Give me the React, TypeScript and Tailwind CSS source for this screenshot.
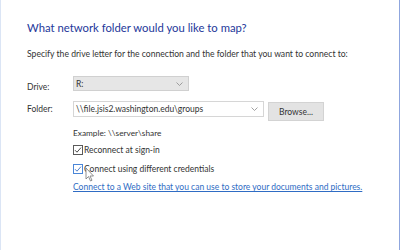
import React from "react";

const Check = ({ blue }: { blue?: boolean }) => (
  <span
    className={`flex h-[10px] w-[10px] shrink-0 items-center justify-center border ${
      blue ? "border-[#4a86d8]" : "border-[#5a5a5a]"
    } bg-white`}
  >
    <svg width="8" height="8" viewBox="0 0 8 8">
      <path d="M1 4.2 L3 6.2 L7 1.6" fill="none" stroke={blue ? "#3b6fc4" : "#333"} strokeWidth="0.9" />
    </svg>
  </span>
);

const Chevron = () => (
  <svg width="7" height="4" viewBox="0 0 7 4">
    <path d="M0.5 0.5 L3.5 3.5 L6.5 0.5" fill="none" stroke="#8a8a8a" strokeWidth="0.8" />
  </svg>
);

export default function App() {
  return (
    <div
      className="relative flex h-[250px] w-[400px] flex-col border-l border-l-[#dbe5f5] border-r border-r-[#8fa6de] bg-white text-[#333333]"
      style={{ fontFamily: 'Lato, "Noto Sans", sans-serif' }}
    >
      <div className="pl-[26px] pt-[20px] text-[11.3px] leading-[16px] text-[#24389a]">
        What network folder would you like to map?
      </div>
      <div className="mt-[11px] pl-[26px] text-[8.6px] leading-[14px]">
        Specify the drive letter for the connection and the folder that you want to connect to:
      </div>
      <div className="mt-[15px] flex items-start pl-[26px] text-[8.5px] leading-[14px]">
        <span className="mt-[4px] w-[46px]">Drive:</span>
        <div className="flex h-[15px] w-[116px] items-center justify-between border border-[#d0d0d0] bg-[#e6e6e6] pl-[2px] pr-[5px]">
          <span>R:</span>
          <Chevron />
        </div>
      </div>
      <div className="mt-[7px] flex items-start pl-[26px] text-[8.5px] leading-[14px]">
        <span className="mt-[1px] w-[46px]">Folder:</span>
        <div className="flex h-[16px] w-[191px] items-center justify-between border border-[#d6d6d6] bg-white pl-[2px] pr-[5px]">
          <span>\\file.jsis2.washington.edu\groups</span>
          <Chevron />
        </div>
        <div className="ml-[4px] mt-[1px] flex h-[19px] w-[56px] items-center justify-center border border-[#d3d3d3] bg-[#e3e3e3]">
          Browse...
        </div>
      </div>
      <div className="mt-[5px] pl-[72px] text-[8.3px] leading-[14px]">Example: \\server\share</div>
      <div className="mt-[3px] flex items-center gap-[1px] pl-[72px] text-[8.5px] leading-[14px]">
        <Check />
        <span>Reconnect at sign-in</span>
      </div>
      <div className="mt-[5px] flex items-center gap-[1px] pl-[72px] text-[8.5px] leading-[14px]">
        <Check blue />
        <span>Connect using different credentials</span>
      </div>
      <div className="mt-[4px] pl-[72px] text-[8.5px] leading-[14px] text-[#2f6cc4] underline">
        Connect to a Web site that you can use to store your documents and pictures.
      </div>
      <svg className="absolute left-[84px] top-[167px]" width="10" height="15" viewBox="0 0 10 15">
        <path d="M1 1 L1 12 L3.5 9.5 L5.5 14 L7 13.3 L5 9 L8.5 9 Z" fill="white" stroke="#777" strokeWidth="0.8" />
      </svg>
    </div>
  );
}
